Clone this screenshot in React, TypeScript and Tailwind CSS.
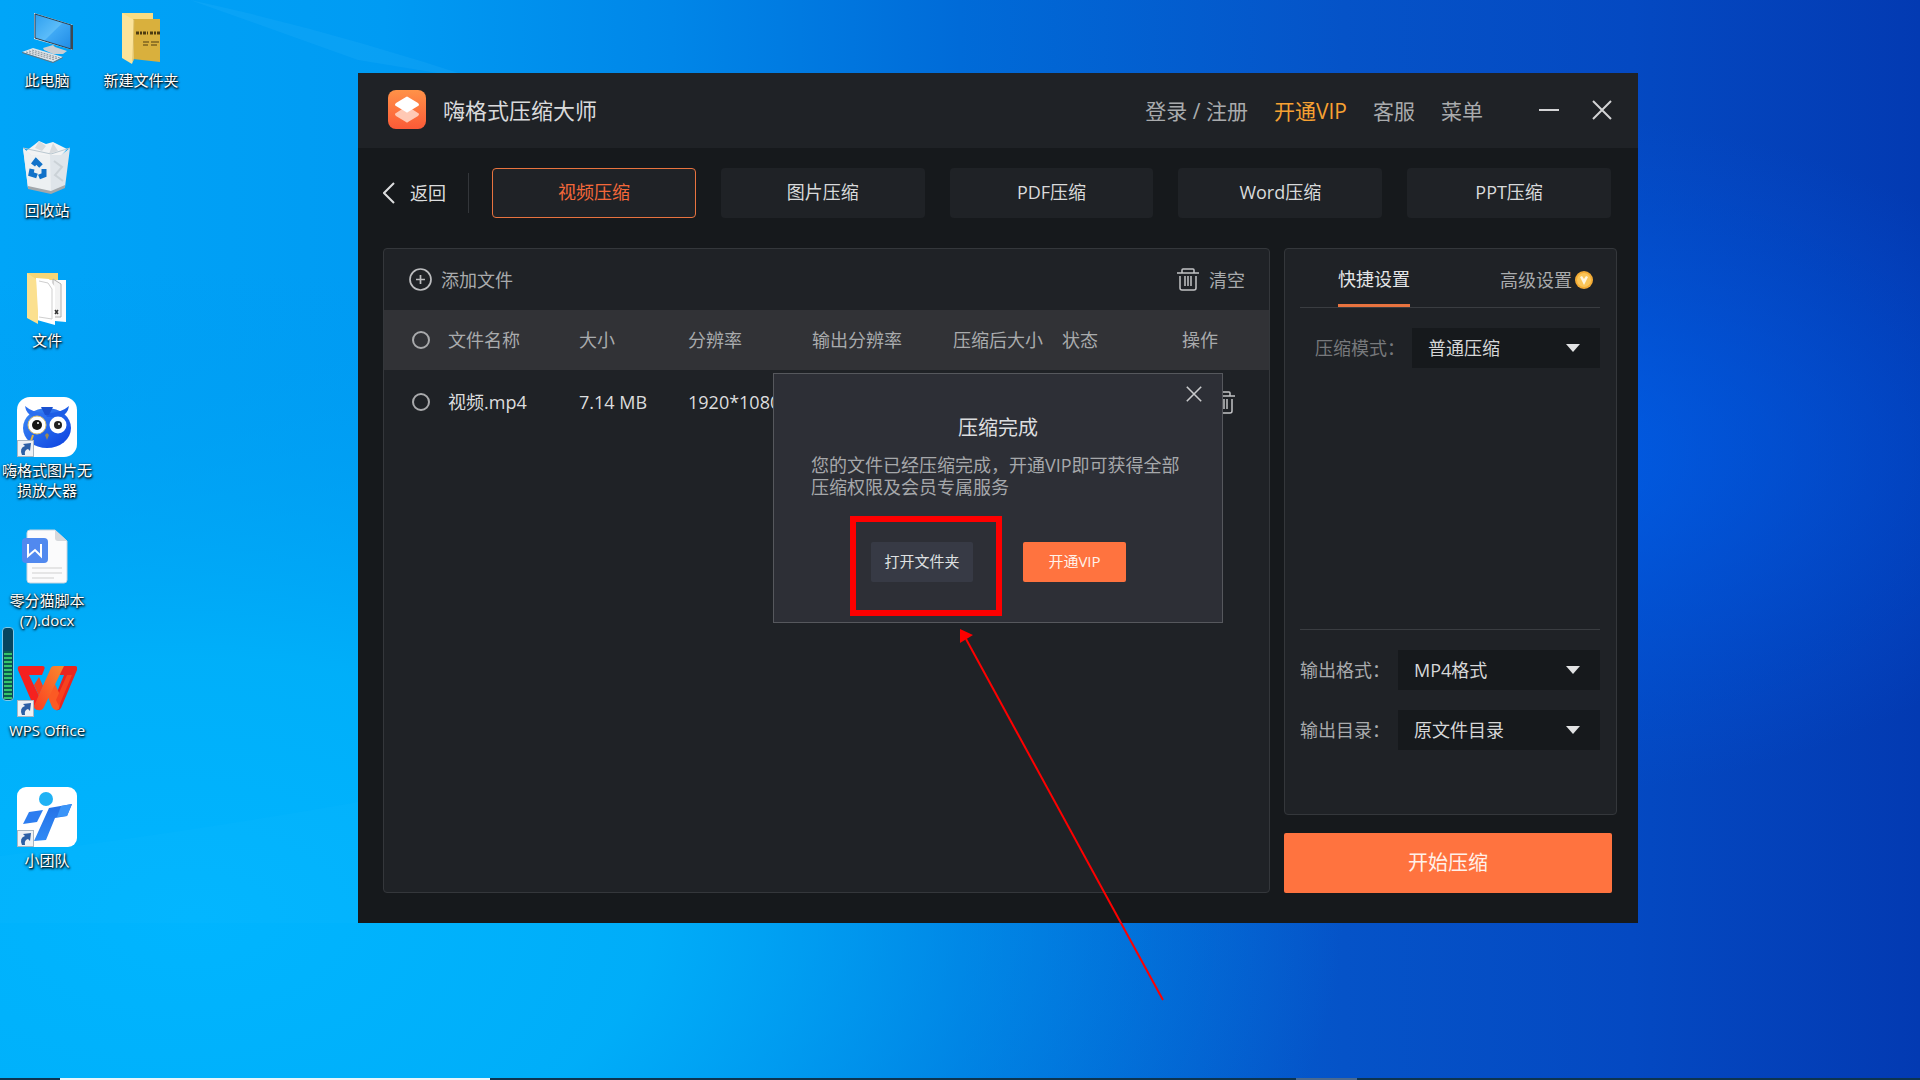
import { useState } from 'react';
import clsx from 'clsx';

interface DesktopItem {
  label: string;
  icon: React.ReactNode;
  shortcut?: boolean;
}

function ComputerIcon() {
  return (
    <svg viewBox="0 0 60 60" className="w-15 h-15" aria-hidden="true">
      <defs>
        <linearGradient id="screen" x1="0" y1="0" x2="1" y2="1">
          <stop offset="0" stopColor="#2d9ff0" />
          <stop offset="0.5" stopColor="#5bbcf9" />
          <stop offset="0.52" stopColor="#3fa9f5" />
          <stop offset="1" stopColor="#1f8be6" />
        </linearGradient>
      </defs>
      <path d="M26 41 L36 38 L38 40 L50 44 L46 47 L36 47 L27 43 Z" fill="#c9ced3" />
      <path d="M17 6 L56 18 V43 L17 32 Z" fill="#e3e8ec" />
      <path d="M18 7 L54 18 V42 L18 31 Z" fill="url(#screen)" stroke="#2c3f50" strokeWidth="1" />
      <path d="M54 18 L56 18 V43 L54 42 Z" fill="#40494f" />
      <path d="M5 45 L16 41 L46 50 L36 55 Z" fill="#dfe4e8" />
      <path d="M5 45 L36 55 L46 50 V51 L36 56 L5 46 Z" fill="#66737d" />
      <path d="M9 45 L38 53 M12 44 L41 52 M15 43 L43 51" stroke="#8b979f" strokeWidth="1" strokeDasharray="2 1" />
    </svg>
  );
}

function YellowFolderIcon() {
  return (
    <svg viewBox="0 0 60 60" className="w-15 h-15" aria-hidden="true">
      <path d="M11 6 H42 V50 H20 Z" fill="#f8dc82" />
      <path d="M22 12 H49 V55 L22 52 Z" fill="#d9b03d" />
      <path d="M11 6 L23 13 V51 L21 57 L11 51 Z" fill="#fbe39a" />
      <path d="M23 13 L22 54" stroke="#d8b95c" strokeWidth="1" />
      <path d="M25 26 H49" stroke="#4c3a10" strokeWidth="3" strokeDasharray="3 1 2 1 3 1 1 2" />
      <path d="M32 35 H38 M40 35 H48 M32 38 H37 M40 38 H46" stroke="#7d6321" strokeWidth="1.5" />
    </svg>
  );
}

function RecycleIcon() {
  return (
    <svg viewBox="0 0 60 60" className="w-15 h-15" aria-hidden="true">
      <path d="M9 14 L17 8 L22 4 L29 7 L36 5 L42 8 L50 12 L43 20 H15 Z" fill="#f2f3f4" />
      <path d="M22 4 L29 9 L25 14 L18 11 Z M36 6 L41 14 L32 17 Z" fill="#d8dbde" />
      <path d="M6 11 L14 18 H44 L53 11 L48 50 L34 56 L11 51 Z" fill="#dfe5ea" />
      <path d="M6 11 L14 18 H33 L34 56 L11 51 Z" fill="#edf0f2" />
      <path d="M6 11 L34 17 L53 11" fill="none" stroke="#b9c7d0" strokeWidth="1" />
      <path d="M11 49 L34 54 L48 48 L48 51 L34 57 L11 52 Z" fill="#a2a7ab" />
      <path d="M37 24 L45 30 L38 38 L46 44" fill="none" stroke="#cbd2d7" strokeWidth="2" />
      <g fill="none" stroke="#1272c9" strokeWidth="5">
        <path d="M16 28 L19 24 L24 29" />
        <path d="M15 32 L14 37 L20 39" />
        <path d="M27 32 L27 38 L22 40" />
      </g>
    </svg>
  );
}

function FilesIcon() {
  return (
    <svg viewBox="0 0 60 60" className="w-15 h-15" aria-hidden="true">
      <path d="M10 6 H41 V48 H20 Z" fill="#f7d675" />
      <path d="M30 13 H49 V55 L38 54 Z" fill="#fbfbfb" />
      <path d="M36 12 V50 H44 V17 Z" fill="#f3f3f3" stroke="#b0b0b0" strokeWidth="1" />
      <path d="M19 11 L32 12 L38 20 V58 L20 53 Z" fill="#ffffff" />
      <path d="M22 14 L31 16 L35 22 V52 L22 50" fill="none" stroke="#cfcfcf" strokeWidth="1" />
      <path d="M38 43 L41 47 M41 43 L38 47" stroke="#333333" strokeWidth="1.5" />
      <path d="M10 6 L19 12 L21 44 V57 L10 51 Z" fill="#fbe08f" />
    </svg>
  );
}

function OwlIcon() {
  return (
    <svg viewBox="0 0 60 60" className="w-15 h-15" aria-hidden="true">
      <defs>
        <linearGradient id="owl" x1="0" y1="0" x2="1" y2="1">
          <stop offset="0" stopColor="#3d8bf5" />
          <stop offset="1" stopColor="#0b3fe0" />
        </linearGradient>
      </defs>
      <rect width="60" height="60" rx="13" fill="#ffffff" />
      <ellipse cx="30" cy="31" rx="24" ry="20" fill="url(#owl)" />
      <path d="M8 9 Q15 15 26 16 Q33 17 30 20 L17 20 Q9 17 8 9 Z" fill="#2c6ff0" />
      <path d="M52 9 Q45 15 34 16 Q27 17 30 20 L43 20 Q51 17 52 9 Z" fill="#1d5de6" />
      <path d="M24 10 H36 L32 18 H28 Z" fill="#1a51cf" />
      <circle cx="20" cy="28" r="9" fill="#ffffff" stroke="#dcc173" strokeWidth="1" />
      <circle cx="41" cy="28" r="8.5" fill="#ffffff" />
      <circle cx="20" cy="28" r="5" fill="#161616" />
      <circle cx="41" cy="28" r="4" fill="#222222" />
      <circle cx="21" cy="26" r="1" fill="#ffffff" />
      <circle cx="42" cy="27" r="1" fill="#ffffff" />
      <path d="M28 38 L30 36 L32 38 L30 43 Z" fill="#9c8955" />
      <path d="M16 38 L14 44" stroke="#e4b23a" strokeWidth="2" />
    </svg>
  );
}

function DocIcon() {
  return (
    <svg viewBox="0 0 60 60" className="w-15 h-15" aria-hidden="true">
      <path d="M13 3 H38 L50 14 V53 Q50 56 47 56 H13 Q10 56 10 53 V6 Q10 3 13 3 Z" fill="#fbfbfc" stroke="#c8d4df" strokeWidth="1" />
      <path d="M38 3 L50 14 H41 Q38 14 38 11 Z" fill="#d5d8dc" />
      <rect x="5" y="11" width="26" height="25" rx="4" fill="#5189ef" />
      <path d="M11 17 V29 L18 23 L24 29 V17" fill="none" stroke="#ffffff" strokeWidth="2" />
      <path d="M15 41 H45 M15 46 H45 M15 51 H37" stroke="#cfcfcf" strokeWidth="1" />
    </svg>
  );
}

function WpsIcon() {
  return (
    <svg viewBox="0 0 60 60" className="w-15 h-15" aria-hidden="true">
      <defs>
        <linearGradient id="wpsOrange" x1="1" y1="0" x2="0" y2="1">
          <stop offset="0" stopColor="#f98a2c" />
          <stop offset="1" stopColor="#fb3d22" />
        </linearGradient>
      </defs>
      {/* left stroke, open triangle inside */}
      <path d="M3 9 H25 Q29 9 27 13 L25 18 L21 18 H12 L22 39 L17 50 L1 13 Q0 9 3 9 Z" fill="#f5211f" />
      <path d="M22 20 L26 29 L22 39 L17 28 Z" fill="#f4411f" />
      {/* right stroke */}
      <path d="M44 9 H58 Q61 9 60 13 L44 51 Q42 54 39 53 L38 40 L47 18 H41 Z" fill="#e9251e" />
      <path d="M37 25 L44 40 L42 52 Q38 55 35 50 L31 40 Z" fill="#fb5a24" />
      <path d="M37 9 H47 L27 50 Q25 54 21 53 Q17 53 17 49 L33 13 Q34 9 37 9 Z" fill="url(#wpsOrange)" />
      <path d="M50 18 L55 18 L42 49 L39 43 Z" fill="#f6421f" />
    </svg>
  );
}

function TeamIcon() {
  return (
    <svg viewBox="0 0 60 60" className="w-15 h-15" aria-hidden="true">
      <defs>
        <linearGradient id="team" x1="0" y1="0" x2="0" y2="1">
          <stop offset="0" stopColor="#2470e6" />
          <stop offset="1" stopColor="#2f8af5" />
        </linearGradient>
      </defs>
      <rect width="60" height="60" rx="9" fill="#ffffff" />
      <ellipse cx="29" cy="12" rx="7" ry="7" fill="#1fb2f5" />
      <path d="M12 25 L26 23 L20 35 L6 37 Z" fill="#2c7df0" />
      <path d="M32 21 L55 17 L50 29 L38 31 L29 53 L17 54 Z" fill="url(#team)" />
      <path d="M44 19 L55 17 L50 29 L40 30 Z" fill="#3a94f8" />
    </svg>
  );
}

function ShortcutBadge() {
  return (
    <svg viewBox="0 0 17 17" className="absolute left-0 bottom-0 w-[17px] h-[17px]" aria-hidden="true">
      <rect x="0.5" y="0.5" width="16" height="16" fill="#eef1f4" stroke="#a9b6c2" />
      <path d="M5 15 Q2 8 8 6 L6 4 L14 3 L13 11 L11 9 Q7 10 8 15 Z" fill="#2c5fa5" />
    </svg>
  );
}

function TrashIcon() {
  return (
    <svg viewBox="0 0 22 23" className="w-[22px] h-[23px]" fill="none" stroke="currentColor" strokeWidth="1.5" aria-hidden="true">
      <path d="M0 5 H22 M5 5 V2 Q5 1 6 1 H16 Q17 1 17 2 V5" />
      <path d="M3 8 V20 Q3 22 5 22 H17 Q19 22 19 20 V8 M8 8 V18 M11 8 V18 M14 8 V18" />
    </svg>
  );
}

function CloseIcon({ className }: { className: string }) {
  return (
    <svg viewBox="0 0 20 20" className={className} fill="none" stroke="currentColor" strokeWidth="2" aria-hidden="true">
      <path d="M1 1 L19 19 M19 1 L1 19" />
    </svg>
  );
}

const COLUMNS: DesktopItem[][] = [
  [
    { label: '此电脑', icon: <ComputerIcon /> },
    { label: '回收站', icon: <RecycleIcon /> },
    { label: '文件', icon: <FilesIcon /> },
    { label: '嗨格式图片无损放大器', icon: <OwlIcon />, shortcut: true },
    { label: '零分猫脚本(7).docx', icon: <DocIcon /> },
    { label: 'WPS Office', icon: <WpsIcon />, shortcut: true },
    { label: '小团队', icon: <TeamIcon />, shortcut: true },
  ],
  [{ label: '新建文件夹', icon: <YellowFolderIcon /> }],
];

const TABS = ['视频压缩', '图片压缩', 'PDF压缩', 'Word压缩', 'PPT压缩'];

const HEADERS = [
  { label: '文件名称', width: 'w-[131px]' },
  { label: '大小', width: 'w-[109px]' },
  { label: '分辨率', width: 'w-[124px]' },
  { label: '输出分辨率', width: 'w-[141px]' },
  { label: '压缩后大小', width: 'w-[109px]' },
  { label: '状态', width: 'w-[120px]' },
  { label: '操作', width: '' },
];

interface SelectProps {
  id: string;
  label: string;
  value: string;
  labelClass: string;
  boxClass: string;
}

function SelectRow({ id, label, value, labelClass, boxClass }: SelectProps) {
  return (
    <div className="flex items-center justify-between">
      <label htmlFor={id} className={clsx('whitespace-nowrap', labelClass)}>{label}</label>
      <div className={clsx('relative', boxClass)}>
        <select
          id={id}
          className="w-full h-10 pl-4 pr-10 appearance-none bg-[#16191c] text-[#d6d7d8] text-lg leading-6 outline-none"
        >
          <option>{value}</option>
        </select>
        <svg viewBox="0 0 14 8" className="absolute right-5 top-4 w-3.5 h-2 pointer-events-none" aria-hidden="true">
          <path d="M0 0 H14 L7 8 Z" fill="#e2e3e4" />
        </svg>
      </div>
    </div>
  );
}

function Checkbox({ label }: { label: string }) {
  return (
    <input
      type="checkbox"
      aria-label={label}
      className="block w-[18px] h-[18px] appearance-none rounded-full border-2 border-[#a9aaac] checked:bg-[#ff733f]"
    />
  );
}

function DoneDialog({ onClose }: { onClose: () => void }) {
  return (
    <div className="absolute inset-0 flex items-center justify-center">
      <div role="dialog" aria-labelledby="done-title" className="relative w-[450px] h-[250px] bg-[#2d2f36] border border-[#56585d]">
        <button onClick={onClose} aria-label="关闭" className="absolute right-5 top-3 text-[#c9cacc]">
          <CloseIcon className="w-4 h-4" />
        </button>
        <h2 id="done-title" className="mt-10 text-center text-xl leading-7 text-[#dcdddf]">压缩完成</h2>
        <p className="mt-3 ml-[37px] mr-8 text-lg leading-[22px] text-[#a6a8ab]">
          您的文件已经压缩完成，开通VIP即可获得全部压缩权限及会员专属服务
        </p>
        <div className="mt-11 ml-[97px] flex gap-[50px] text-[15px] leading-5">
          <button className="w-[102px] h-10 pb-0.5 rounded-xs bg-[#373a45] text-[#dfe0e2]">打开文件夹</button>
          <button className="w-[103px] h-10 pb-0.5 rounded-xs bg-[#ff733f] text-[#fff1ea]">开通VIP</button>
        </div>
        {/* highlight frame round the open-folder button */}
        <div className="absolute left-[76px] top-[142px] w-[152px] h-[100px] border-6 border-[#fe0000] pointer-events-none" />
      </div>
    </div>
  );
}

function AppWindow() {
  const [tab, setTab] = useState(TABS[0]);
  const [dialogOpen, setDialogOpen] = useState(true);

  return (
    <main className="absolute left-[358px] right-[282px] top-[73px] bg-[#16191c]">
      <header className="h-[75px] pb-0.5 pl-[30px] pr-[26px] flex items-center bg-[#1f2226]">
        <svg viewBox="0 0 38 39" className="w-[38px] h-[39px]" aria-hidden="true">
          <defs>
            <linearGradient id="logo" x1="0" y1="0" x2="0" y2="1">
              <stop offset="0" stopColor="#ff9248" />
              <stop offset="1" stopColor="#fb5a37" />
            </linearGradient>
          </defs>
          <rect width="38" height="39" rx="8" fill="url(#logo)" />
          <path d="M8 23 L19 16 L30 23 Q32 24 30 26 L20 32 Q19 33 18 32 L8 26 Q6 24 8 23 Z" fill="#ffc9b5" />
          <path d="M18 7 Q19 6 20 7 L30 13 Q32 15 30 16 L20 22 Q19 23 18 22 L8 16 Q6 15 8 13 Z" fill="#ffffff" />
        </svg>
        <h1 className="ml-[17px] text-[22px] leading-8 text-[#d9dadb]">嗨格式压缩大师</h1>
        <nav className="ml-auto pt-0.5 flex items-center gap-[26px] text-[21px] leading-7 text-[#a9abad]">
          <a href="#login">登录 / 注册</a>
          <a href="#vip" className="text-[#f7a132]">开通VIP</a>
          <a href="#service">客服</a>
          <button>菜单</button>
        </nav>
        <button aria-label="最小化" className="ml-14 w-5 h-5 flex items-center">
          <span className="w-full h-0.5 bg-[#d3d4d5]" />
        </button>
        <button aria-label="关闭窗口" className="ml-[33px] text-[#d3d4d5]">
          <CloseIcon className="w-5 h-5" />
        </button>
      </header>

      <div className="pl-[25px] pr-[21px] pt-5 pb-[30px] text-lg leading-6">
        <div className="flex items-center pr-[6px]">
          <button className="flex items-center gap-[15px] text-[#dcddde]">
            <svg viewBox="0 0 12 22" className="w-3 h-[22px]" fill="none" stroke="currentColor" strokeWidth="2" aria-hidden="true">
              <path d="M11 1 L1 11 L11 21" />
            </svg>
            返回
          </button>
          <div className="ml-[22px] mr-[23px] w-px h-10 bg-[#33363a]" />
          <div className="flex-1 flex gap-[25px]">
            {TABS.map(t => (
              <button
                key={t}
                onClick={() => setTab(t)}
                className={clsx(
                  'flex-1 h-[50px] pb-0.5 rounded-sm border bg-[#1f2226]',
                  tab === t ? 'border-[#e8733f] text-[#f4683a]' : 'border-transparent text-[#d9dadb]',
                )}
              >
                {t}
              </button>
            ))}
          </div>
        </div>

        <div className="mt-[30px] flex gap-[14px]">
          <section className="flex-1 min-w-0 border border-[#34373b] rounded-sm bg-[#1f2226]">
            <div className="h-[61px] pl-[25px] pr-6 flex items-center justify-between text-[#a9abad]">
              <button className="flex items-center gap-[9px]">
                <svg viewBox="0 0 23 23" className="w-[23px] h-[23px]" fill="none" stroke="#bcbdbf" aria-hidden="true">
                  <circle cx="11.5" cy="11.5" r="10.5" strokeWidth="1.7" />
                  <path d="M7 11.5 H16 M11.5 7 V16" strokeWidth="1.7" />
                </svg>
                添加文件
              </button>
              <button className="flex items-center gap-[10px]">
                <span className="text-[#c2c3c5]"><TrashIcon /></span>
                清空
              </button>
            </div>
            <table className="w-full table-fixed text-left">
              <thead>
                <tr className="h-15 bg-[#313236] text-[#a9abad]">
                  <th className="w-16 pl-7"><Checkbox label="全选" /></th>
                  {HEADERS.map(h => (
                    <th key={h.label} className={clsx('font-normal whitespace-nowrap', h.width)}>{h.label}</th>
                  ))}
                </tr>
              </thead>
              <tbody>
                <tr className="h-16 text-[#dcddde]">
                  <td className="pl-7"><Checkbox label="选择 视频.mp4" /></td>
                  <td>视频.mp4</td>
                  <td>7.14 MB</td>
                  <td>1920*1080</td>
                  <td />
                  <td />
                  <td />
                  <td className="pl-[31px]">
                    <button aria-label="删除" className="block text-[#c2c3c5]"><TrashIcon /></button>
                  </td>
                </tr>
              </tbody>
            </table>
          </section>

          <aside className="w-[333px]">
            <div className="h-[567px] pl-[15px] pr-4 flex flex-col border border-[#34373b] rounded-sm bg-[#1f2226] text-[#a9abad]">
              <div className="h-[59px] pl-[38px] pr-[7px] flex items-stretch justify-between border-b border-[#3a3d41]">
                <button className="pt-1 border-b-3 border-[#e8733f] text-[#e4e5e6]">快捷设置</button>
                <button className="pt-1 flex items-center gap-[3px]">
                  高级设置
                  <svg viewBox="0 0 18 18" className="w-[18px] h-[18px]" aria-hidden="true">
                    <circle cx="9" cy="9" r="9" fill="#f3ab35" />
                    <circle cx="9" cy="9" r="7" fill="#fbc558" />
                    <path d="M5 6 L7 5 L9 8 L11 5 L13 6 L9 14 Z" fill="#fff6de" />
                  </svg>
                </button>
              </div>
              <div className="mt-5">
                <SelectRow id="mode" label="压缩模式：" value="普通压缩" labelClass="pl-[15px] text-[#77797c]" boxClass="w-[188px]" />
              </div>
              <div className="mt-auto mb-16 pt-5 flex flex-col gap-5 border-t border-[#3a3d41]">
                <SelectRow id="format" label="输出格式：" value="MP4格式" labelClass="" boxClass="w-[202px]" />
                <SelectRow id="folder" label="输出目录：" value="原文件目录" labelClass="" boxClass="w-[202px]" />
              </div>
            </div>
            <div className="mt-[18px] pr-[5px]">
              <button className="w-full h-15 rounded-xs bg-[#ff733f] text-xl leading-7 text-[#fff1ea]">开始压缩</button>
            </div>
          </aside>
        </div>
      </div>

      {dialogOpen && <DoneDialog onClose={() => setDialogOpen(false)} />}
    </main>
  );
}

function Wallpaper() {
  return (
    <svg viewBox="0 0 1920 1080" preserveAspectRatio="none" className="absolute inset-0 w-full h-full" aria-hidden="true">
      <defs>
        <linearGradient id="sky" x1="0" y1="0" x2="1" y2="0">
          <stop offset="0" stopColor="#00a5f8" />
          <stop offset="0.2" stopColor="#009bf3" />
          <stop offset="0.35" stopColor="#0086e8" />
          <stop offset="0.5" stopColor="#006bd8" />
          <stop offset="0.7" stopColor="#0553c8" />
          <stop offset="0.85" stopColor="#0449c2" />
          <stop offset="1" stopColor="#033ab2" />
        </linearGradient>
        <radialGradient id="glow" cx="0.1" cy="0.85" r="0.6">
          <stop offset="0" stopColor="#00b5ff" />
          <stop offset="0.4" stopColor="#00b1fa" stopOpacity="0.9" />
          <stop offset="1" stopColor="#0098ee" stopOpacity="0" />
        </radialGradient>
        <radialGradient id="light" cx="0.78" cy="0.42" r="0.32">
          <stop offset="0" stopColor="#0062ee" stopOpacity="0.9" />
          <stop offset="1" stopColor="#0054dc" stopOpacity="0" />
        </radialGradient>
      </defs>
      <rect width="1920" height="1080" fill="url(#sky)" />
      <rect width="1920" height="1080" fill="url(#glow)" />
      <rect width="1920" height="1080" fill="url(#light)" />
      <path d="M190 0 Q330 30 480 80 L358 60 Z" fill="#4cc4ff" opacity="0.12" />
      <path d="M0 856 Q200 830 358 802 V923 H0 Z" fill="#18c0ff" opacity="0.12" />
    </svg>
  );
}

export default function App() {
  return (
    <div className="relative h-screen overflow-hidden bg-[#0078d7] font-['Open_Sans','Noto_Sans_CJK_SC',sans-serif]">
      <Wallpaper />

      <div className="relative flex">
        {COLUMNS.map((items, i) => (
          <ul key={i} className="w-[94px] pt-[7px]">
            {items.map(item => (
              <li key={item.label} className="h-[130px] flex flex-col items-center">
                <div className="relative">
                  {item.icon}
                  {item.shortcut && <ShortcutBadge />}
                </div>
                <span className="mt-[3px] px-0.5 text-center text-[15px] leading-5 text-white [text-shadow:1px_1px_2px_#000,0_1px_3px_#000]">
                  {item.label}
                </span>
              </li>
            ))}
          </ul>
        ))}
      </div>

      {/* volume meter on the screen edge */}
      <div className="absolute left-[2px] top-[627px] w-3 h-[74px] p-px flex flex-col justify-end rounded-sm border border-[#7fc9ea] bg-[#07455f]">
        <div className="h-12 bg-[repeating-linear-gradient(0deg,#35c46b_0px,#35c46b_2px,#0a5a50_2px,#0a5a50_4px)]" />
      </div>

      <AppWindow />

      <svg viewBox="0 0 210 375" className="absolute left-[958px] top-[627px] w-[210px] h-[375px] pointer-events-none" aria-hidden="true">
        <path d="M8 12 L205 373" stroke="#fe0000" strokeWidth="2" />
        <path d="M2 2 L15 8 L2 16 Z" fill="#fe0000" />
      </svg>

      {/* auto-hidden taskbar edge */}
      <div className="absolute inset-x-0 bottom-0 h-0.5 flex bg-[#0d3450]">
        <div className="ml-[60px] w-[430px] bg-[#e8f6fc]" />
        <div className="ml-[806px] w-[61px] bg-[#4a6a90]" />
      </div>
    </div>
  );
}
